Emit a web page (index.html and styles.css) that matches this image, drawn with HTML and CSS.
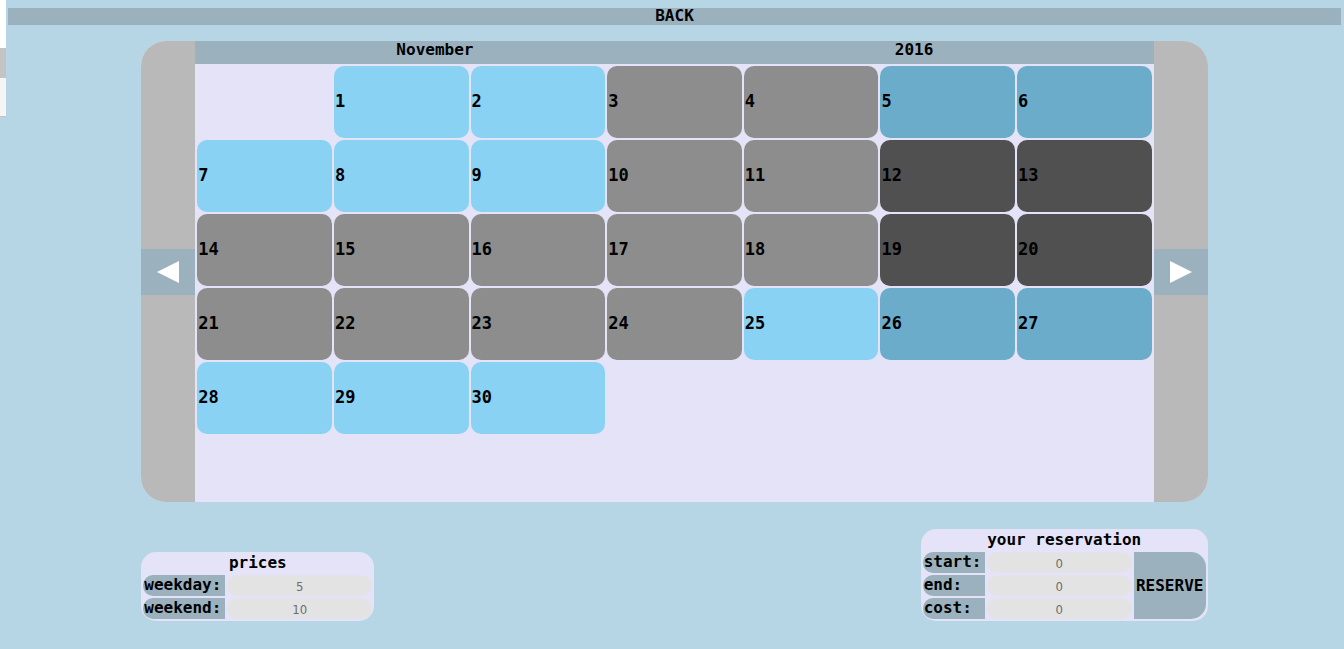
FILE: index.html
```html
<!DOCTYPE html>
<html lang="en">
<head>
<meta charset="utf-8">
<title>Reservation calendar</title>
<link rel="stylesheet" href="styles.css">
</head>
<body>
<div class="edge-tab"><span class="edge-mid"></span><span class="edge-end"></span></div>
<a class="back" href="#">BACK</a>
<main class="content">
<section class="calendar">
<div class="side side-left"><button class="arrow" aria-label="Previous month"><svg width="22" height="22" viewBox="0 0 22 22"><path d="M0 11 22 0V22Z" fill="#fff"/></svg></button></div>
<div class="month">
<header class="month-head"><span>November</span><span>2016</span></header>
<table class="days">
<tr><td></td><td class="free">1</td><td class="free">2</td><td class="past">3</td><td class="past">4</td><td class="weekend">5</td><td class="weekend">6</td></tr>
<tr><td class="free">7</td><td class="free">8</td><td class="free">9</td><td class="past">10</td><td class="past">11</td><td class="taken">12</td><td class="taken">13</td></tr>
<tr><td class="past">14</td><td class="past">15</td><td class="past">16</td><td class="past">17</td><td class="past">18</td><td class="taken">19</td><td class="taken">20</td></tr>
<tr><td class="past">21</td><td class="past">22</td><td class="past">23</td><td class="past">24</td><td class="free">25</td><td class="weekend">26</td><td class="weekend">27</td></tr>
<tr><td class="free">28</td><td class="free">29</td><td class="free">30</td><td></td><td></td><td></td><td></td></tr>
</table>
</div>
<div class="side side-right"><button class="arrow" aria-label="Next month"><svg width="22" height="22" viewBox="0 0 22 22"><path d="M22 11 0 0V22Z" fill="#fff"/></svg></button></div>
</section>
<div class="panels">
<section class="panel prices">
<h2>prices</h2>
<label for="weekday">weekday:</label><input id="weekday" value="5" disabled>
<label for="weekend">weekend:</label><input id="weekend" value="10" disabled>
</section>
<form class="panel reservation">
<h2>your reservation</h2>
<label for="start">start:</label><input id="start" value="0" disabled>
<button class="reserve" type="button">RESERVE</button>
<label for="end">end:</label><input id="end" value="0" disabled>
<label for="cost">cost:</label><input id="cost" value="0" disabled>
</form>
</div>
</main>
</body>
</html>
```
FILE: styles.css
```css
* { box-sizing: border-box; }
body {
  margin: 8px 3px 8px 8px;
  background: #b7d6e5;
  color: #000;
  font: bold 16px/17px "DejaVu Sans Mono", monospace;
}
button, input { font: inherit; border: 0; padding: 0; margin: 0; color: inherit; }
button { cursor: pointer; }
.edge-tab {
  position: absolute;
  top: 0;
  left: 0;
  width: 6px;
  height: 117px;
  background: #fff;
  display: flex;
  flex-direction: column;
  justify-content: flex-end;
}
.edge-mid { height: 30px; background: #c4c4c4; }
.edge-end { height: 39px; background: #f5f5f5; border-bottom: 1px solid #c4c4c4; }
.back {
  display: block;
  height: 17px;
  background: #9bb2be;
  color: #000;
  line-height: 16px;
  text-align: center;
  text-decoration: none;
}
.content { width: 80%; margin: 16px auto 0; }
.calendar {
  display: flex;
  min-height: 461px;
  border-radius: 25px;
  overflow: hidden;
  background: #e4e3f7;
}
.side { flex: 0 0 54px; display: flex; align-items: center; background: #b9b9b9; }
.arrow {
  width: 100%;
  height: 46px;
  background: #9bb2be;
  display: flex;
  align-items: center;
  justify-content: center;
}
.month { flex: 1; }
.month-head {
  display: grid;
  grid-template-columns: 1fr 1fr;
  height: 23px;
  background: #9bb2be;
  line-height: 17px;
  text-align: center;
}
.days { width: 100%; table-layout: fixed; border-spacing: 2px; }
.days td { height: 72px; padding: 1px 1px 3px; border-radius: 10px; font-size: 17px; }
.free { background: #8ad2f4; }
.past { background: #8d8d8d; }
.weekend { background: #6baccb; }
.taken { background: #505050; }
.panels {
  display: flex;
  justify-content: space-between;
  align-items: flex-end;
  margin-top: 27px;
}
.panel {
  display: grid;
  grid-auto-rows: 21px;
  gap: 2px;
  padding: 0 2px 2px;
  border-radius: 15px;
  background: #e4e3f7;
  line-height: 20px;
}
.prices { grid-template-columns: 82px 145px; }
.reservation { grid-template-columns: 62px 145px 72px; }
.panel h2 { grid-column: 1 / -1; margin: 0; font-size: 16px; line-height: 21px; text-align: center; }
.panel label {
  padding-left: 1px;
  border-radius: 10px 0 0 10px;
  background: #9bb2be;
}
.panel input {
  width: 100%;
  min-width: 0;
  padding-top: 2px;
  border: 1px solid #e4e3ec;
  border-radius: 10px;
  background: #e3e3e3;
  color: #6d6d6d;
  text-align: center;
  font: 13px/17px "DejaVu Sans Condensed", "DejaVu Sans", sans-serif;
}
.reserve {
  grid-column: 3;
  grid-row: 2 / 5;
  border-radius: 0 15px 15px 0;
  background: #9bb2be;
}
```
